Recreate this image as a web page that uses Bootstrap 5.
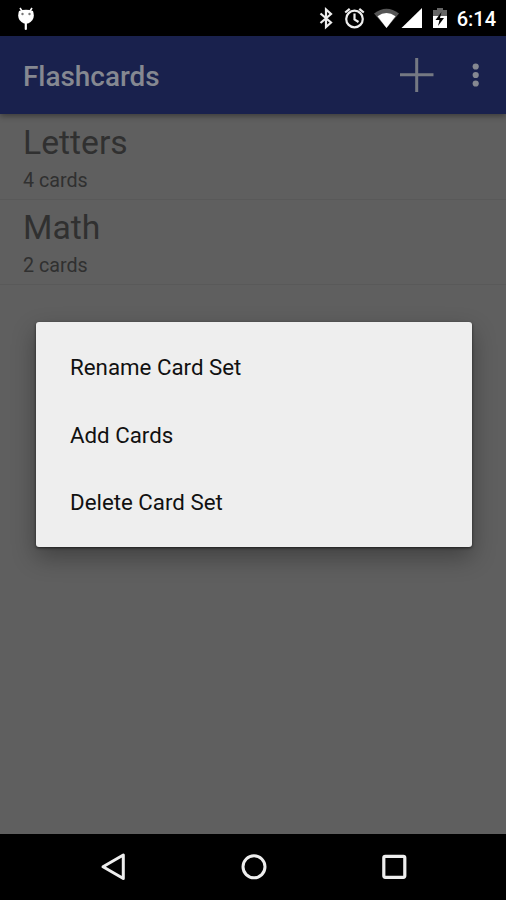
<!DOCTYPE html>
<html lang="en">
<head>
<meta charset="utf-8">
<meta name="viewport" content="width=device-width, initial-scale=1">
<title>Flashcards</title>
<link href="https://cdn.jsdelivr.net/npm/bootstrap@5.3.0/dist/css/bootstrap.min.css" rel="stylesheet">
<style>
body { font-family: Roboto, "Liberation Sans", sans-serif; background: #5f5f5f; }
svg { display: block; flex: none; }
.screen { height: 900px; overflow: hidden; background: #5f5f5f; }
.status-bar { height: 36px; background: #000; color: #fff; padding: 0 10px 0 17px; }
.clock { font-size: 20px; font-weight: 500; line-height: 36px; margin-left: 7.5px; padding-top: 2px; }
.app-bar { height: 78px; background: #19214d; color: #858891; padding: 0 24px 0 23px; box-shadow: 0 2px 6px rgba(0,0,0,.4); z-index: 1; }
.app-title { font-size: 27.9px; font-weight: 500; line-height: 78px; padding-top: 3px; }
.set-row { height: 85px; padding: 5px 23px 0; border-bottom: 1px solid #595959; color: #303030; }
.set-row:first-child { height: 86px; }
.set-row + .set-row { padding-top: 4px; }
.set-name { font-size: 33.7px; line-height: 48px; }
.set-count { font-size: 19.7px; line-height: 28px; }
.dialog-menu { left: 36px; top: 321.5px; width: 435.5px; height: 225px; padding: 12.5px 0 0; background: #eee; border-radius: 3px; box-shadow: 0 1px 3px rgba(0,0,0,.6), 0 10px 24px rgba(0,0,0,.33); z-index: 2; }
.dialog-item { height: 67.5px; line-height: 67.5px; padding: 0 34px; font-size: 22.3px; color: #111; text-align: left; }
.nav-keys { height: 66px; background: #000; padding: 0 98px 0 99px; }
</style>
</head>
<body>
<div class="screen position-relative d-flex flex-column">
  <header class="status-bar d-flex align-items-center justify-content-between">
    <svg width="18" height="36" viewBox="17 0 18 36"><path d="M20 8l2 3M32 8l-2 3" stroke="#fff" stroke-width="1.6"/><path d="M19 11Q26 8.500 33 11Q36 20 28 23.500h-4Q16 20 19 11z" fill="#fff"/><path d="M25.800 23v6" stroke="#fff" stroke-width="2.200" stroke-linecap="round"/><circle cx="22.500" cy="14" r="1.200" fill="#777"/><circle cx="29.500" cy="14" r="1.200" fill="#777"/></svg>
    <div class="d-flex align-items-center">
      <svg width="133" height="36" viewBox="316 0 133 36">
        <path d="M320.500 13.500l10.500 9-5 4.500V9.500l5 4.500-10.500 9" fill="none" stroke="#eee" stroke-width="2.200"/>
        <g fill="none" stroke="#eee" stroke-width="2.200"><circle cx="354.500" cy="19" r="8.300"/><path d="M354.500 13.500v6l4 2.500M345.200 12.500l4.500-3.700M363.800 12.500l-4.500-3.700"/></g>
        <path d="M374 13.500Q386.500 4 399 13.500L386.500 28z" fill="#555"/><path d="M377.500 16.200Q386.500 10 395.500 16.200L386.500 28z" fill="#fff"/>
        <path d="M422 8v20h-20.500z" fill="#fff"/>
        <path d="M433 10h4V8h6v2h4v7h-14z" fill="#666"/><path d="M433 16h14v12h-14z" fill="#fff"/><path d="M441.500 12l-6 8h4l-1.500 6 6-8h-4z" fill="#000"/>
      </svg>
      <span class="clock">6:14</span>
    </div>
  </header>
  <nav class="app-bar d-flex align-items-center justify-content-between position-relative">
    <span class="app-title">Flashcards</span>
    <svg width="84" height="78" viewBox="398 36 84 78"><path d="M400 74.800h33.500M416.700 58v34" stroke="#757983" stroke-width="3"/><g fill="#858891"><circle cx="475.700" cy="66.500" r="3.100"/><circle cx="475.700" cy="75" r="3.100"/><circle cx="475.700" cy="83.500" r="3.100"/></g></svg>
  </nav>
  <main class="flex-grow-1">
    <div class="set-row"><div class="set-name">Letters</div><div class="set-count">4 cards</div></div>
    <div class="set-row"><div class="set-name">Math</div><div class="set-count">2 cards</div></div>
  </main>
  <footer class="nav-keys d-flex align-items-center justify-content-between">
    <svg width="28" height="66" viewBox="99 834 28 66"><path d="M103 866.700L123.300 855v23.500z" fill="none" stroke="#eee" stroke-width="3" stroke-linejoin="round"/></svg>
    <svg width="28" height="66" viewBox="239.500 834 28 66"><circle cx="253.500" cy="866.800" r="11" fill="none" stroke="#eee" stroke-width="3"/></svg>
    <svg width="28" height="66" viewBox="380 834 28 66"><rect x="383.800" y="856.300" width="21" height="21" rx="1.500" fill="none" stroke="#eee" stroke-width="3.200"/></svg>
  </footer>
  <div class="dialog-menu position-absolute d-flex flex-column" role="menu">
    <button class="dialog-item btn border-0 rounded-0">Rename Card Set</button>
    <button class="dialog-item btn border-0 rounded-0">Add Cards</button>
    <button class="dialog-item btn border-0 rounded-0">Delete Card Set</button>
  </div>
</div>
<script src="https://cdn.jsdelivr.net/npm/bootstrap@5.3.0/dist/js/bootstrap.bundle.min.js"></script>
</body>
</html>
